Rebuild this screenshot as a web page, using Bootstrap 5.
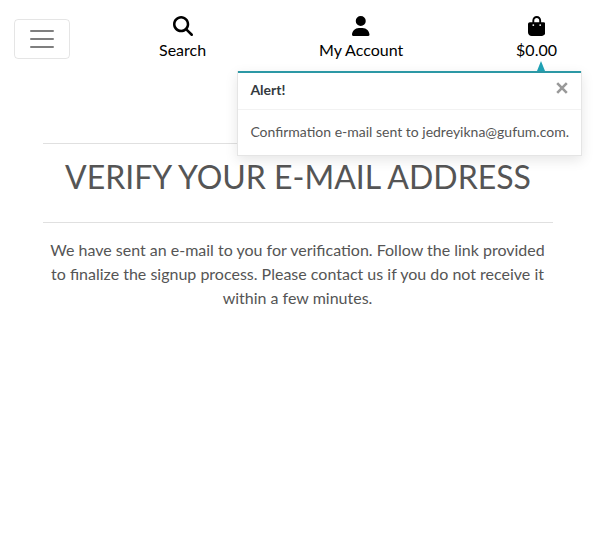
<!DOCTYPE html>
<html lang="en">
<head>
<meta charset="utf-8">
<meta name="viewport" content="width=device-width, initial-scale=1">
<title>Verify Your E-mail Address</title>
<link href="https://cdn.jsdelivr.net/npm/bootstrap@5.3.0/dist/css/bootstrap.min.css" rel="stylesheet">
<style>
body { font-family: Lato, sans-serif; color: #555; background: #fff; }
.site-header { padding: 15px 36px 0 14px; height: 71px; }
.menu-button { width: 56px; height: 40px; margin-top: 4px; border: 1px solid rgba(0,0,0,.1); border-radius: 4px; }
.menu-button svg { width: 30px; height: 30px; stroke: rgba(0,0,0,.5); stroke-width: 2; stroke-linecap: round; }
.site-links { margin-left: 89px; }
.site-links a { color: #000; line-height: 24px; }
.site-links svg { height: 20px; display: block; margin: 1px auto 2px; fill: #000; }
.message-area { padding: 72px 40px 0 43px; }
.message-area hr { margin: 0; border-color: #000; opacity: .12; }
.message-area h1 { font-size: 32px; line-height: 38px; margin: 14px 0 26px; font-weight: 400; white-space: nowrap; }
.message-area p { margin: 15px 1px 0 0; }
/* Notification that hangs below the bag link */
.notice { position: absolute; top: 71px; left: 237px; width: 345px; border-top: 0; border-radius: 0; background: #fff; border-color: rgba(0,0,0,.1); box-shadow: 0 4px 12px rgba(0,0,0,.1); font-size: 14px; z-index: 10; }
.notice::after { content: ""; position: absolute; left: 0; right: 0; top: 0; height: 2px; background: #2c98a5; }
.notice-arrow { position: absolute; left: 299px; top: -10px; border: 4px solid transparent; border-top: 0; border-bottom: 10px solid #1fa0b3; }
.notice .toast-header { height: 39px; padding: 0 13px 2px 12.4px; color: #343a40; background: #fff; border-color: rgba(0,0,0,.05); border-radius: 0; }
.notice .toast-header svg { width: 12px; height: 12px; display: block; stroke: #999; stroke-width: 2.6; margin-top: -3px; }
.notice .toast-body { padding: 11px 12px 13px 12.4px; line-height: 21px; white-space: nowrap; }
</style>
</head>
<body>
<header class="site-header d-flex align-items-start">
  <button class="menu-button btn p-0 flex-shrink-0 d-flex align-items-center justify-content-center" type="button" aria-label="Toggle navigation"><svg viewBox="0 0 30 30"><path d="M4 7h22M4 15h22M4 23h22"/></svg></button>
  <nav class="site-links d-flex flex-grow-1 justify-content-between text-center">
    <a class="text-decoration-none" href="#"><svg viewBox="0 0 512 512"><path d="M416 208c0 45.9-14.9 88.3-40 122.7L502.6 457.4c12.5 12.5 12.5 32.8 0 45.3s-32.8 12.5-45.3 0L330.7 376c-34.4 25.2-76.8 40-122.7 40C93.1 416 0 322.9 0 208S93.1 0 208 0S416 93.1 416 208zM208 352a144 144 0 1 0 0-288 144 144 0 1 0 0 288z"/></svg>Search</a>
    <a class="text-decoration-none" href="#"><svg viewBox="0 0 448 512"><path d="M224 256A128 128 0 1 0 224 0a128 128 0 1 0 0 256zm-45.7 48C79.8 304 0 383.8 0 482.3C0 498.7 13.3 512 29.7 512H418.3c16.4 0 29.7-13.3 29.7-29.7C448 383.8 368.2 304 269.7 304H178.3z"/></svg>My Account</a>
    <a class="text-decoration-none" href="#"><svg viewBox="0 0 448 512"><path d="M160 112c0-35.3 28.7-64 64-64s64 28.7 64 64v48H160V112zm-48 48H48c-26.5 0-48 21.5-48 48V416c0 53 43 96 96 96H352c53 0 96-43 96-96V208c0-26.5-21.5-48-48-48H336V112C336 50.1 285.9 0 224 0S112 50.1 112 112v48zm24 48a24 24 0 1 1 0 48 24 24 0 1 1 0-48zm152 24a24 24 0 1 1 48 0 24 24 0 1 1 -48 0z"/></svg>$0.00</a>
  </nav>
</header>
<div class="notice toast show" role="alert">
  <span class="notice-arrow"></span>
  <div class="toast-header justify-content-between">
    <strong>Alert!</strong>
    <button class="btn p-0 border-0" type="button" aria-label="Close"><svg viewBox="0 0 12 12"><path d="M1.2 1.2l9.6 9.6M10.8 1.2l-9.6 9.6"/></svg></button>
  </div>
  <div class="toast-body">Confirmation e-mail sent to jedreyikna@gufum.com.</div>
</div>
<main class="message-area text-center">
  <hr>
  <h1 class="text-uppercase">Verify Your E-mail Address</h1>
  <hr>
  <p>We have sent an e-mail to you for verification. Follow the link provided to finalize the signup process. Please contact us if you do not receive it within a few minutes.</p>
</main>
<script src="https://cdn.jsdelivr.net/npm/bootstrap@5.3.0/dist/js/bootstrap.bundle.min.js"></script>
</body>
</html>
